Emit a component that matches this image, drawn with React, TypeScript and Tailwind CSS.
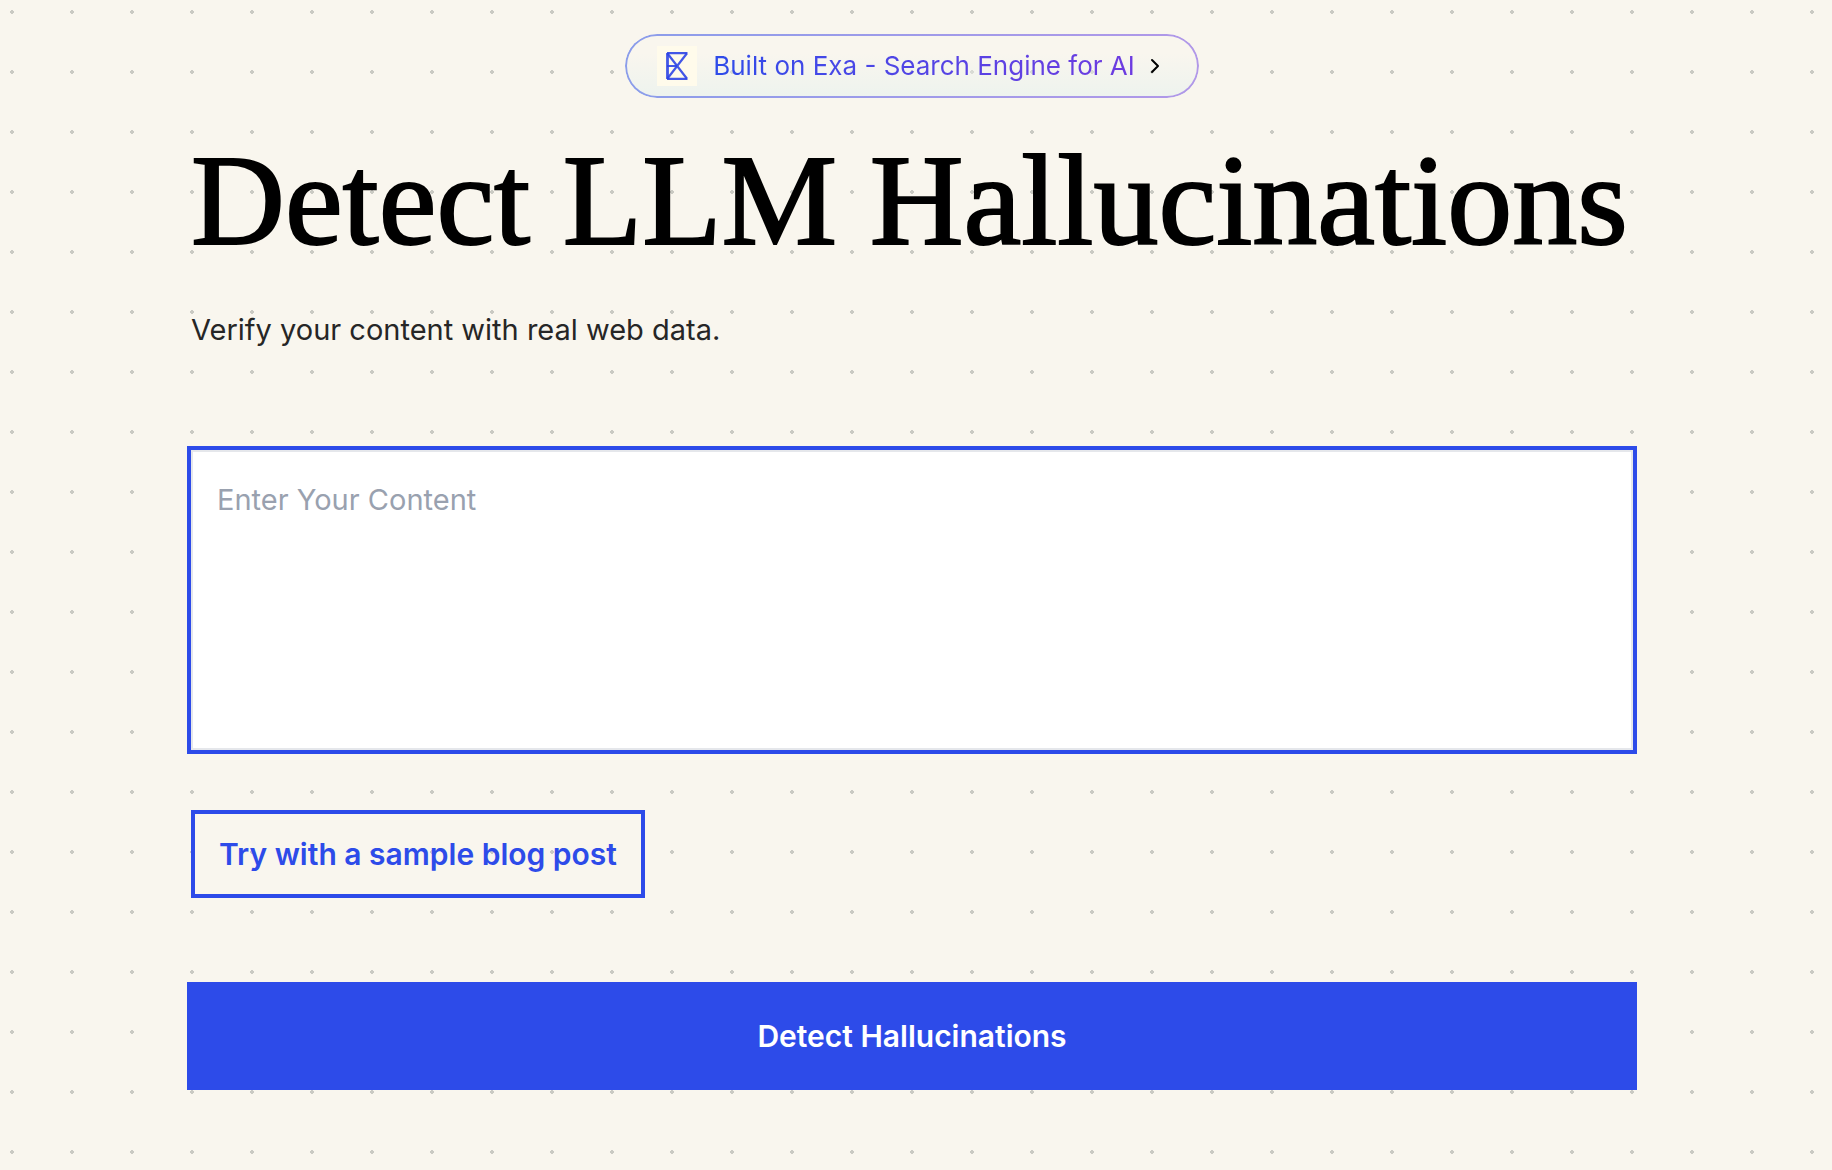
import React, { useState } from 'react';
import { ChevronRight } from 'lucide-react';

const SAMPLE_POST =
  'The Eiffel Tower was completed in 1889 and stands in Paris. It was the tallest structure in the world until 1930.';

const ExaLogo = () => (
  <span className="flex size-10 shrink-0 items-center justify-center bg-[#fffbeb]">
    <svg width="24" height="30" viewBox="0 0 24 30" fill="none" stroke="#2f45e6" strokeWidth="2.2" strokeOpacity="0.9" aria-hidden="true">
      <path d="M2.5 2v26" strokeWidth="2.8" />
      <path d="M2 2.2h20.5M2 27.8h20.5M2 15h10" />
      <path d="M2.5 2.5L21.8 27.5M21.8 2.5L2.5 27.5" />
    </svg>
  </span>
);

const ExaBadge = () => (
  <a
    href="#exa"
    className="relative flex h-16 items-center rounded-full bg-linear-to-b from-[#edf3ee]/0 from-30% to-[#edf3ee] px-8 before:pointer-events-none before:absolute before:inset-0 before:rounded-full before:bg-linear-to-r before:from-[#8b9dea] before:to-[#b198e8] before:p-[2px] before:[mask:linear-gradient(#000_0_0)_exclude,linear-gradient(#000_0_0)_content-box]"
  >
    <ExaLogo />
    <span className="ml-4 bg-linear-to-r from-[#2d4be9] to-[#6d3be0] bg-clip-text text-[26px] leading-10 text-transparent">
      Built on Exa - Search Engine for AI
    </span>
    <ChevronRight size={24} strokeWidth={2} className="ml-2 text-black" />
  </a>
);

export default function App() {
  const [content, setContent] = useState('');

  return (
    <div className="min-h-screen bg-[#f9f6ee] bg-[radial-gradient(circle_at_12px_12px,#cacac3_2px,transparent_2px)] bg-[size:60px_60px] pr-2 font-['Inter',sans-serif]">
      <main className="mx-auto flex w-full max-w-[1442px] flex-col pt-[34px] pb-16">
        <div className="flex justify-center">
          <ExaBadge />
        </div>

        <h1 className="mt-9 font-['Liberation_Serif',serif] text-[130px] leading-[132px] whitespace-nowrap text-black [-webkit-text-stroke:2px_#000]">
          Detect LLM Hallucinations
        </h1>

        <form className="mt-11 flex flex-col" onSubmit={(e) => e.preventDefault()}>
          <label htmlFor="content" className="text-[29px] leading-10 text-[#262626]">
            Verify your content with real web data.
          </label>

          <textarea
            id="content"
            value={content}
            onChange={(e) => setContent(e.target.value)}
            placeholder="Enter Your Content"
            className="mt-25 h-[300px] w-full resize-none border-2 border-gray-200 bg-white px-6 py-7 text-[29px] leading-10 text-black ring-4 ring-[#2d4be9] outline-none placeholder:text-gray-400"
          />

          <button
            type="button"
            onClick={() => setContent(SAMPLE_POST)}
            className="mt-15 h-22 self-start border-4 border-[#2d4be9] px-6 text-[30px] leading-10 font-semibold text-[#2d4be9]"
          >
            Try with a sample blog post
          </button>

          <button
            type="submit"
            className="mt-22 h-25 w-full bg-[#2d4be9] text-[30px] leading-10 font-semibold text-white ring-4 ring-[#2d4be9]"
          >
            Detect Hallucinations
          </button>
        </form>
      </main>
    </div>
  );
}
